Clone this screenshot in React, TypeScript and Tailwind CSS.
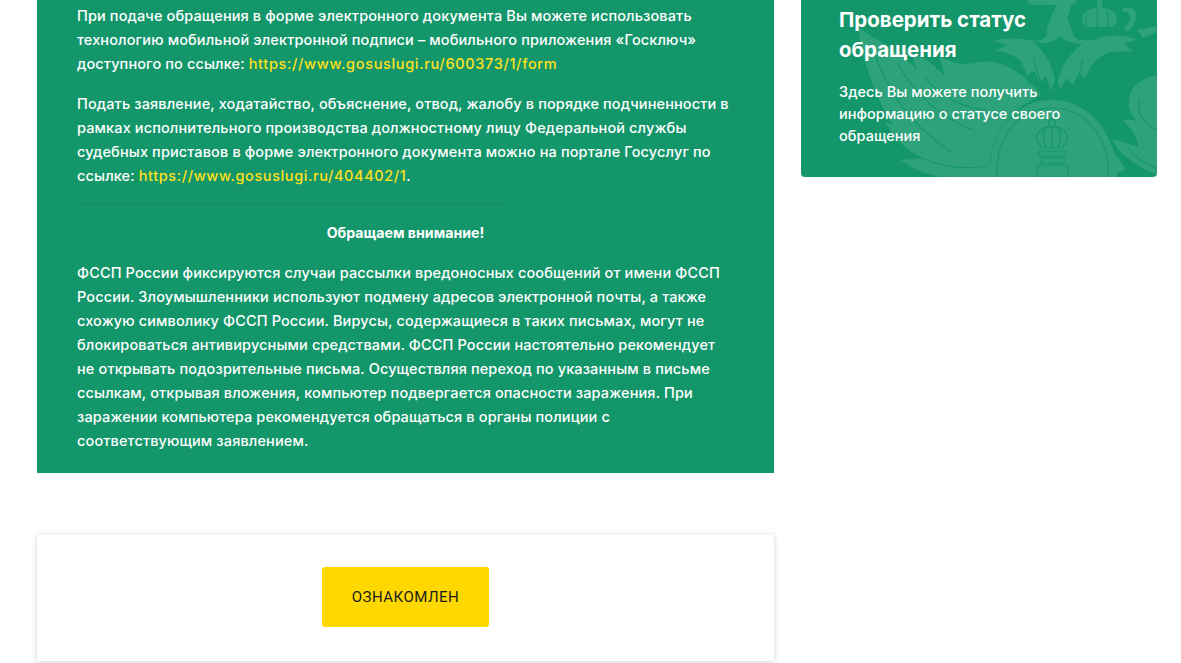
function Emblem() {
  return (
    <svg viewBox="0 0 356 177" className="absolute inset-0 h-full w-full">
      <g fill="#ffffff" opacity="0.115">
        {/* left wing */}
        <path d="M57 28c5 32 15 66 35 97l-8-3c12 20 24 30 38 36l-22 2c16 12 30 17 50 17h39c-3-27 7-52 33-72l18-10c-15-20-40-37-60-33-16 4-28 2-42-6l6 20c-12-12-24-20-34-24l6 18C100 54 78 40 57 28z" />
        {/* left head and neck */}
        <path d="M258 0c-4 10-12 22-12 32 0 8-8 10-18 8-12-2-24-2-36 1l14 4-12 6c10 0 18 4 26 10l6 14 7-4 6 12 6-7 5 15 4-12c-4-16-10-26-22-38 12 4 22 2 28-8 6-10 8-22 12-33z" />
        {/* right head and neck */}
        <path d="M258 0c4 12 12 24 14 34 2 8 16 8 30 3 12-2 24-2 34 3l-14 3 10 8-22 1c-8 2-14 6-20 14l-6 12-6-5-6 12-6-7-7 12-2-10c4-16 12-26 24-36-12 0-24-6-28-16-2-10 0-20 5-28z" />
        {/* crowns */}
        <path d="M226 0h50c-2 3-4 5-8 5h-34c-4 0-6-2-8-5z" />
        <path d="M296 0h5v8c8 0 15 5 15 11 0 4-3 6-6 8h-23c-4-2-6-4-6-8 0-6 7-11 15-11z" />
        <path d="M322 8c6-2 12 0 13 6 1 8-4 14-10 18l-2-4c4-4 7-8 6-13-1-3-4-4-7-3zM336 30l20-4v6l-14 6z" />
        {/* right wing */}
        <path d="M356 75c-14 3-26 10-28 24-1 10 2 16 8 22-4-1-10-2-14 0 8 6 14 16 16 26l-26-8c4 14 22 26 44 36z" />
        <path d="M305 140l20 30-22 7h-10z" />
        {/* shield */}
        <path d="M189 177c-3-42 24-77 62-77s65 35 65 77z" />
        {/* feather and ring lines in the card colour */}
        <g fill="none" stroke="#14966b" strokeWidth="1.2">
          <path d="M196 177c-2-38 20-69 55-69s58 31 56 69" />
          <path d="M72 48c12 40 36 76 78 104M96 62c16 30 40 54 76 68M124 78c16 18 36 30 62 32M120 158c24 10 44 12 66 8" />
          <path d="M218 62l10 22M232 58l8 26M296 60l-10 24M282 60l-6 22" />
          <path d="M338 100c-2 12 4 24 18 30M326 146c8 12 18 18 30 22" />
          <path d="M296 8v19M287 12c-3 4-3 10-1 15M305 12c3 4 3 10 1 15" />
          {/* small crown and column */}
          <circle cx="251" cy="123" r="3.5" />
          <path d="M243 128c-6 2-8 8-7 12l5 8h20l5-8c1-4-1-10-7-12-5-1-11-1-16 0z" />
          <path d="M251 127v21M244 129c-2 6-2 12 1 19M258 129c2 6 2 12-1 19" />
          <path d="M238 151h27v5h-27zM240 158h23v5h-23zM236 165h31v12h-31z" />
        </g>
      </g>
    </svg>
  );
}

export default function App() {
  return (
    <div className="h-[663px] overflow-hidden bg-white font-['Inter',sans-serif]">
      <div className="flex items-start gap-[27px] pl-[37px]">
        <div className="w-[737px]">
          <div className="bg-[#14966b] px-10 pt-1 pb-5 text-[14.5px] leading-6 font-medium tracking-[0.13px] text-white">
            <p className="mb-4">
              При подаче обращения в форме электронного документа Вы можете использовать технологию мобильной
              электронной подписи – мобильного приложения «Госключ» доступного по ссылке:{' '}
              <a className="tracking-[0.66px] text-[#ffe11a]">https://www.gosuslugi.ru/600373/1/form</a>
            </p>
            <p>
              Подать заявление, ходатайство, объяснение, отвод, жалобу в порядке подчиненности в рамках
              исполнительного производства должностному лицу Федеральной службы судебных приставов в форме
              электронного документа можно на портале Госуслуг по ссылке:{' '}
              <a className="tracking-[0.6px] text-[#ffe11a]">https://www.gosuslugi.ru/404402/1</a>.
            </p>
            <div className="mt-[16px] mb-[16px] h-px w-[432px] bg-[#108a61]" />
            <p className="mb-4 text-center text-[14.2px] font-bold tracking-normal">Обращаем внимание!</p>
            <p>
              ФССП России фиксируются случаи рассылки вредоносных сообщений от имени ФССП России. Злоумышленники
              используют подмену адресов электронной почты, а также схожую символику ФССП России. Вирусы,
              содержащиеся в таких письмах, могут не блокироваться антивирусными средствами. ФССП России
              настоятельно рекомендует не открывать подозрительные письма. Осуществляя переход по указанным в
              письме ссылкам, открывая вложения, компьютер подвергается опасности заражения. При заражении
              компьютера рекомендуется обращаться в органы полиции с соответствующим заявлением.
            </p>
          </div>
          <div className="mt-[62px] flex h-[126px] items-start justify-center bg-white pt-8 shadow-[0_1px_6px_rgba(60,80,100,0.25)]">
            <button className="h-[60px] w-[167px] rounded-[3px] bg-[#ffd800] font-['Roboto',sans-serif] text-[15px] tracking-[0.5px] text-[#1c1c1c]">
              ОЗНАКОМЛЕН
            </button>
          </div>
        </div>
        <div className="relative h-[177px] w-[356px] overflow-hidden rounded-b-[4px] bg-[#14966b] px-[38px] text-white">
          <Emblem />
          <div className="relative">
            <h2 className="mt-[5px] text-[20.5px] leading-[30px] font-bold">Проверить статус обращения</h2>
            <p className="mt-4 text-[14.5px] leading-[22px] font-medium tracking-[0.05px]">
              Здесь Вы можете получить информацию о статусе своего обращения
            </p>
          </div>
        </div>
      </div>
    </div>
  );
}
